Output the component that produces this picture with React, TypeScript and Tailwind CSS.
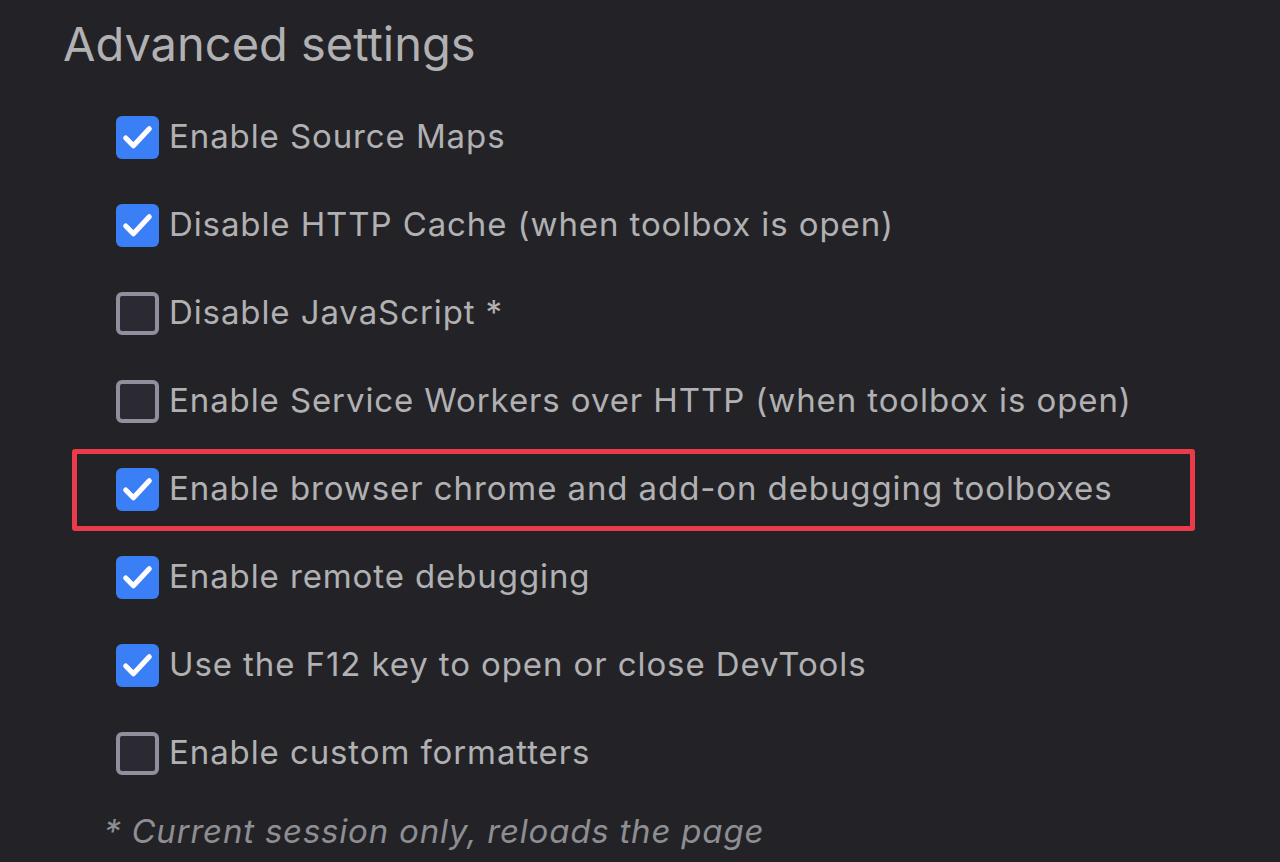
import { useState } from "react";

type Setting = {
  label: string;
  checked: boolean;
  highlight?: boolean;
};

const initialSettings: Setting[] = [
  { label: "Enable Source Maps", checked: true },
  { label: "Disable HTTP Cache (when toolbox is open)", checked: true },
  { label: "Disable JavaScript *", checked: false },
  { label: "Enable Service Workers over HTTP (when toolbox is open)", checked: false },
  { label: "Enable browser chrome and add-on debugging toolboxes", checked: true, highlight: true },
  { label: "Enable remote debugging", checked: true },
  { label: "Use the F12 key to open or close DevTools", checked: true },
  { label: "Enable custom formatters", checked: false },
];

const Checkbox = ({ checked }: { checked: boolean }) =>
  checked ? (
    <span className="flex h-[43px] w-[43px] shrink-0 items-center justify-center rounded-[6px] bg-[#3b7ff6]">
      <svg width="43" height="43" viewBox="0 0 42 42" fill="none">
        <path
          d="M9.5 21.5 L17 29 L32.5 12.5"
          stroke="white"
          strokeWidth="5"
          strokeLinecap="round"
          strokeLinejoin="round"
        />
      </svg>
    </span>
  ) : (
    <span className="h-[43px] w-[43px] shrink-0 rounded-[6px] border-[4px] border-[#8f8f9d] bg-[#2b2a33]" />
  );

const App = () => {
  const [settings, setSettings] = useState<Setting[]>(initialSettings);

  const toggle = (i: number) =>
    setSettings(settings.map((s, idx) => (idx === i ? { ...s, checked: !s.checked } : s)));

  return (
    <div
      className="min-h-[862px] w-full overflow-hidden bg-[#232327] text-[#b1b1b3]"
      style={{ fontFamily: "Inter, 'Noto Sans', sans-serif" }}
    >
      <h1 className="pl-[63px] pt-[16px] text-[47px] leading-[56px] font-normal">Advanced settings</h1>
      <div className="mt-[21px] flex flex-col">
        {settings.map((s, i) => (
          <label
            key={s.label}
            onClick={() => toggle(i)}
            className="relative flex h-[88px] cursor-pointer items-center gap-[10px] pl-[116px] text-[33px] tracking-[0.9px]"
          >
            {s.highlight && (
              <span className="pointer-events-none absolute left-[72px] top-[4px] h-[82px] w-[1123px] rounded-[3px] border-[5px] border-[#eb3a4a]" />
            )}
            <Checkbox checked={s.checked} />
            <span className="whitespace-nowrap">{s.label}</span>
          </label>
        ))}
      </div>
      <p className="mt-[12px] pl-[104px] text-[33px] italic leading-[44px] tracking-[0.8px] text-[#8e8e93]">
        * Current session only, reloads the page
      </p>
    </div>
  );
};

export default App;
